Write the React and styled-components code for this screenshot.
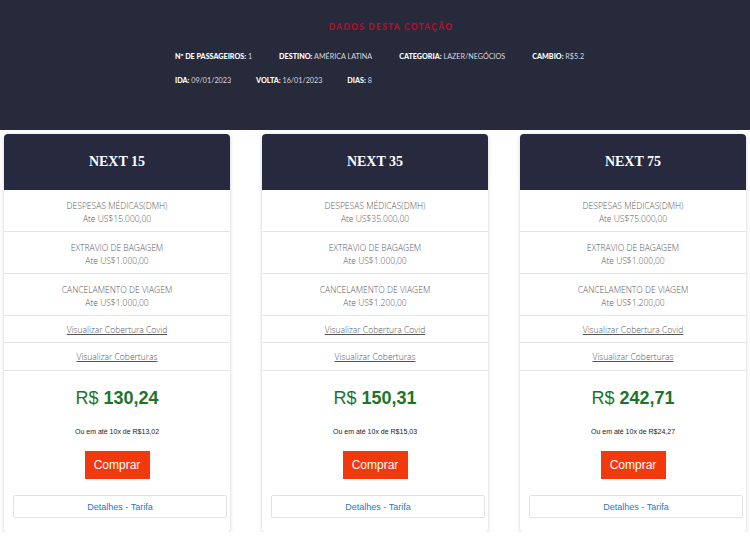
import React from "react";
import styled, { createGlobalStyle } from "styled-components";

const GlobalStyle = createGlobalStyle`
  body {
    margin: 0;
    background: #ffffff;
    font-family: "Lato", "Liberation Sans", sans-serif;
  }
`;

const Banner = styled.div`
  background: #262a3b;
  height: 130px;
  padding-top: 22px;
  box-sizing: border-box;
`;

const BannerTitle = styled.h2`
  margin: 0 0 20px;
  padding-left: 32px;
  text-align: center;
  color: #b3112b;
  font-size: 8.4px;
  font-weight: 900;
  letter-spacing: 1.3px;
  text-transform: uppercase;
`;

const InfoBox = styled.div`
  width: 400px;
  margin: 0 auto;
  display: flex;
  flex-direction: column;
  gap: 15px;
`;

const InfoRow = styled.div`
  display: flex;
  gap: ${(p) => p.gap}px;
`;

const Info = styled.span`
  color: #d8d9de;
  font-size: 7.2px;
  text-transform: uppercase;
  white-space: nowrap;
  b {
    color: #ffffff;
    font-weight: 900;
  }
`;

const Grid = styled.div`
  display: grid;
  grid-template-columns: repeat(3, 226px);
  gap: 32px;
  justify-content: center;
  margin-top: 4px;
`;

const Card = styled.div`
  background: #ffffff;
  border-radius: 4px;
  box-shadow: 0 1px 4px rgba(0, 0, 0, 0.18);
  padding-bottom: 14px;
`;

const CardHead = styled.div`
  height: 56px;
  background: #272a3e;
  border-radius: 4px 4px 0 0;
  display: flex;
  align-items: center;
  justify-content: center;
  color: #ffffff;
  font-family: "Liberation Serif", serif;
  font-weight: 700;
  font-size: 14px;
`;

const Row = styled.div`
  box-sizing: border-box;
  height: ${(p) => p.h}px;
  padding-top: ${(p) => (p.upper ? 2 : 0)}px;
  border-bottom: 1px solid #e4e4e4;
  display: flex;
  flex-direction: column;
  align-items: center;
  justify-content: center;
  color: #5a5a5a;
  font-family: "Open Sans", "Lato", sans-serif;
  font-size: 8.5px;
  font-weight: 300;
  line-height: 13px;
  text-transform: ${(p) => (p.upper ? "uppercase" : "none")};
  a {
    color: #555555;
    text-decoration: underline;
  }
`;

const Amount = styled.span`
  text-transform: none;
`;

const PriceBox = styled.div`
  display: flex;
  flex-direction: column;
  align-items: center;
  padding: 17px 9px 0;
  font-family: "Liberation Sans", Arial, sans-serif;
`;

const Price = styled.div`
  color: #1d7429;
  font-size: 18px;
  b {
    font-weight: 700;
  }
`;

const Installment = styled.div`
  margin-top: 19px;
  font-size: 7px;
  color: #222222;
`;

const BuyButton = styled.button`
  margin-top: 16px;
  width: 65px;
  height: 28px;
  border: none;
  background: #f2390c;
  color: #ffffff;
  font-family: "Liberation Sans", Arial, sans-serif;
  font-size: 12px;
  padding: 0;
`;

const DetailsButton = styled.button`
  margin: 16px -6px 0 0;
  align-self: stretch;
  height: 23px;
  border: 1px solid #e2e2e2;
  border-radius: 2px;
  background: #ffffff;
  color: #2a77c6;
  font-family: "Liberation Sans", Arial, sans-serif;
  font-size: 9px;
  padding: 0;
`;

const plans = [
  { name: "NEXT 15", dmh: "US$15.000,00", bag: "US$1.000,00", cancel: "US$1.000,00", price: "130,24", parcel: "R$13,02" },
  { name: "NEXT 35", dmh: "US$35.000,00", bag: "US$1.000,00", cancel: "US$1.200,00", price: "150,31", parcel: "R$15,03" },
  { name: "NEXT 75", dmh: "US$75.000,00", bag: "US$1.000,00", cancel: "US$1.200,00", price: "242,71", parcel: "R$24,27" },
];

const Plan = ({ plan }) => (
  <Card>
    <CardHead>{plan.name}</CardHead>
    <Row h={42} upper>
      DESPESAS MÉDICAS(DMH)
      <Amount>Ate {plan.dmh}</Amount>
    </Row>
    <Row h={42} upper>
      EXTRAVIO DE BAGAGEM
      <Amount>Ate {plan.bag}</Amount>
    </Row>
    <Row h={42} upper>
      CANCELAMENTO DE VIAGEM
      <Amount>Ate {plan.cancel}</Amount>
    </Row>
    <Row h={27}>
      <a href="#covid">Visualizar Cobertura Covid</a>
    </Row>
    <Row h={28}>
      <a href="#coberturas">Visualizar Coberturas</a>
    </Row>
    <PriceBox>
      <Price>
        R$ <b>{plan.price}</b>
      </Price>
      <Installment>Ou em até 10x de {plan.parcel}</Installment>
      <BuyButton>Comprar</BuyButton>
      <DetailsButton>Detalhes - Tarifa</DetailsButton>
    </PriceBox>
  </Card>
);

export default function App() {
  return (
    <>
      <GlobalStyle />
      <Banner>
        <BannerTitle>Dados desta cotação</BannerTitle>
        <InfoBox>
          <InfoRow gap={27}>
            <Info><b>Nº de passageiros:</b> 1</Info>
            <Info><b>Destino:</b> América Latina</Info>
            <Info><b>Categoria:</b> Lazer/Negócios</Info>
            <Info><b>Cambio:</b> R$5.2</Info>
          </InfoRow>
          <InfoRow gap={25}>
            <Info><b>Ida:</b> 09/01/2023</Info>
            <Info><b>Volta:</b> 16/01/2023</Info>
            <Info><b>Dias:</b> 8</Info>
          </InfoRow>
        </InfoBox>
      </Banner>
      <Grid>
        {plans.map((p) => (
          <Plan key={p.name} plan={p} />
        ))}
      </Grid>
    </>
  );
}
